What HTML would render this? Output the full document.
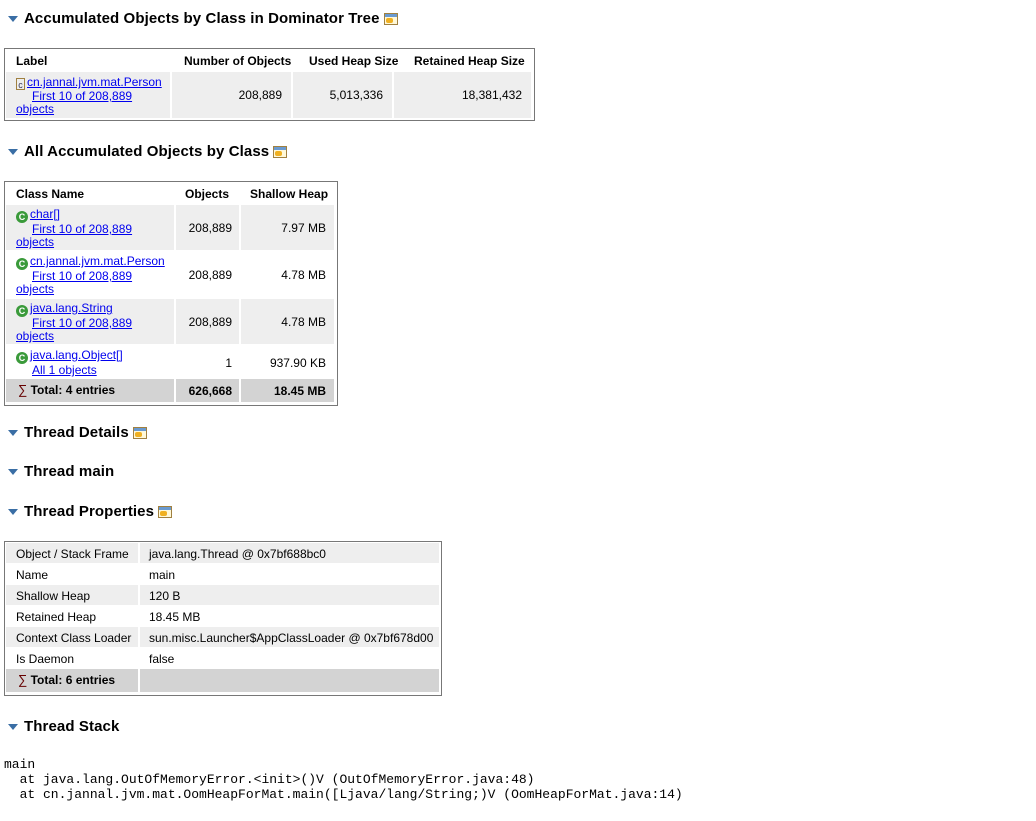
<!DOCTYPE html>
<html><head><meta charset="utf-8"><style>
body{margin:0;background:#fff;width:1036px;height:821px;position:relative;overflow:hidden;font-family:"Liberation Sans",sans-serif;color:#000}
.a{position:absolute;white-space:nowrap}
h2{position:absolute;margin:0;font-size:15px;font-weight:bold;left:24px;line-height:18px;white-space:nowrap;letter-spacing:0.1px}
.tri{position:absolute;left:8px;width:0;height:0;border-left:5px solid transparent;border-right:5px solid transparent;border-top:6px solid #3a6ea5}
.ic{display:inline-block;vertical-align:-2px;margin-left:4px;width:14px;height:12px;border:1px solid #a08040;background:linear-gradient(#6a9ad0 0 3px,#fff8d8 3px);position:relative;box-sizing:border-box}
.ic:after{content:"";position:absolute;left:1px;top:4px;width:7px;height:5px;background:#f0b020;border-radius:2px}
.box{position:absolute;border:1px solid #777;background:#fff;box-sizing:border-box}
.c{position:absolute;font-size:12px;line-height:13px;box-sizing:border-box}
.g{background:#eee}.t{background:#d3d3d3}
.b{font-weight:bold}
a{color:#00e;text-decoration:underline}
.r{text-align:right}
.cc{display:inline-block;width:12px;height:12px;border-radius:50%;background:#3a9a3a;color:#fff;font-size:9px;font-weight:bold;line-height:12px;text-align:center;vertical-align:-2px;margin-right:2px}
pre{position:absolute;margin:0;left:4px;top:757px;font-family:"Liberation Mono",monospace;font-size:13px;line-height:15px}
</style></head><body>

<div class="tri" style="top:16px"></div><h2 style="top:10px">Accumulated Objects by Class in Dominator Tree<span class="ic"></span></h2>

<div class="box" style="left:4px;top:48px;width:531px;height:73px"></div>
<div class="c b" style="left:16px;top:55px">Label</div>
<div class="c b" style="left:184px;top:55px">Number of Objects</div>
<div class="c b" style="left:309px;top:55px">Used Heap Size</div>
<div class="c b" style="left:414px;top:55px">Retained Heap Size</div>
<div class="c g" style="left:6px;top:72px;width:164px;height:46px;padding:4px 0 0 10px"><span style="display:inline-block;width:9px;height:12px;border:1px solid #a08040;font-size:9px;line-height:12px;color:#335;text-align:center;vertical-align:-2px;margin-right:2px;box-sizing:border-box">c</span><a>cn.jannal.jvm.mat.Person</a><br><a style="margin-left:16px">First 10 of 208,889</a><br><a>objects</a></div>
<div class="c g r" style="left:172px;top:72px;width:119px;height:46px;padding:17px 9px 0 0">208,889</div>
<div class="c g r" style="left:293px;top:72px;width:99px;height:46px;padding:17px 9px 0 0">5,013,336</div>
<div class="c g r" style="left:394px;top:72px;width:137px;height:46px;padding:17px 9px 0 0">18,381,432</div>

<div class="tri" style="top:149px"></div><h2 style="top:143px">All Accumulated Objects by Class<span class="ic"></span></h2>

<div class="box" style="left:4px;top:181px;width:334px;height:225px"></div>
<div class="c b" style="left:16px;top:188px">Class Name</div>
<div class="c b" style="left:185px;top:188px">Objects</div>
<div class="c b" style="left:250px;top:188px">Shallow Heap</div>

<div class="c g" style="left:6px;top:205px;width:168px;height:45px;padding:3px 0 0 10px"><span class="cc">C</span><a>char[]</a><br><a style="margin-left:16px">First 10 of 208,889</a><br><a>objects</a></div>
<div class="c g r" style="left:176px;top:205px;width:63px;height:45px;padding:17px 7px 0 0">208,889</div>
<div class="c g r" style="left:241px;top:205px;width:93px;height:45px;padding:17px 8px 0 0">7.97 MB</div>

<div class="c" style="left:6px;top:252px;width:168px;height:45px;padding:3px 0 0 10px"><span class="cc">C</span><a>cn.jannal.jvm.mat.Person</a><br><a style="margin-left:16px">First 10 of 208,889</a><br><a>objects</a></div>
<div class="c r" style="left:176px;top:252px;width:63px;height:45px;padding:17px 7px 0 0">208,889</div>
<div class="c r" style="left:241px;top:252px;width:93px;height:45px;padding:17px 8px 0 0">4.78 MB</div>

<div class="c g" style="left:6px;top:299px;width:168px;height:45px;padding:3px 0 0 10px"><span class="cc">C</span><a>java.lang.String</a><br><a style="margin-left:16px">First 10 of 208,889</a><br><a>objects</a></div>
<div class="c g r" style="left:176px;top:299px;width:63px;height:45px;padding:17px 7px 0 0">208,889</div>
<div class="c g r" style="left:241px;top:299px;width:93px;height:45px;padding:17px 8px 0 0">4.78 MB</div>

<div class="c" style="left:6px;top:346px;width:168px;height:31px;padding:3px 0 0 10px"><span class="cc">C</span><a>java.lang.Object[]</a><br><a style="margin-left:16px">All 1 objects</a></div>
<div class="c r" style="left:176px;top:346px;width:63px;height:31px;padding:11px 7px 0 0">1</div>
<div class="c r" style="left:241px;top:346px;width:93px;height:31px;padding:11px 8px 0 0">937.90 KB</div>

<div class="c t b" style="left:6px;top:379px;width:168px;height:23px;padding:4px 0 0 12px"><span style="font-weight:normal;color:#600;font-size:13px">∑</span> Total: 4 entries</div>
<div class="c t b r" style="left:176px;top:379px;width:63px;height:23px;padding:6px 7px 0 0">626,668</div>
<div class="c t b r" style="left:241px;top:379px;width:93px;height:23px;padding:6px 8px 0 0">18.45 MB</div>

<div class="tri" style="top:430px"></div><h2 style="top:424px">Thread Details<span class="ic"></span></h2>
<div class="tri" style="top:469px"></div><h2 style="top:463px">Thread main</h2>
<div class="tri" style="top:509px"></div><h2 style="top:503px">Thread Properties<span class="ic"></span></h2>

<div class="box" style="left:4px;top:541px;width:438px;height:155px"></div>
<div class="c g" style="left:6px;top:543px;width:132px;height:20px;padding:5px 0 0 10px">Object / Stack Frame</div><div class="c g" style="left:140px;top:543px;width:299px;height:20px;padding:5px 0 0 9px">java.lang.Thread @ 0x7bf688bc0</div>
<div class="c" style="left:6px;top:564px;width:132px;height:20px;padding:5px 0 0 10px">Name</div><div class="c" style="left:140px;top:564px;width:299px;height:20px;padding:5px 0 0 9px">main</div>
<div class="c g" style="left:6px;top:585px;width:132px;height:20px;padding:5px 0 0 10px">Shallow Heap</div><div class="c g" style="left:140px;top:585px;width:299px;height:20px;padding:5px 0 0 9px">120 B</div>
<div class="c" style="left:6px;top:606px;width:132px;height:20px;padding:5px 0 0 10px">Retained Heap</div><div class="c" style="left:140px;top:606px;width:299px;height:20px;padding:5px 0 0 9px">18.45 MB</div>
<div class="c g" style="left:6px;top:627px;width:132px;height:20px;padding:5px 0 0 10px">Context Class Loader</div><div class="c g" style="left:140px;top:627px;width:299px;height:20px;padding:5px 0 0 9px">sun.misc.Launcher$AppClassLoader @ 0x7bf678d00</div>
<div class="c" style="left:6px;top:648px;width:132px;height:20px;padding:5px 0 0 10px">Is Daemon</div><div class="c" style="left:140px;top:648px;width:299px;height:20px;padding:5px 0 0 9px">false</div>
<div class="c t b" style="left:6px;top:669px;width:132px;height:23px;padding:4px 0 0 12px"><span style="font-weight:normal;color:#600;font-size:13px">∑</span> Total: 6 entries</div><div class="c t" style="left:140px;top:669px;width:299px;height:23px"></div>

<div class="tri" style="top:724px"></div><h2 style="top:718px">Thread Stack</h2>

<pre>main
  at java.lang.OutOfMemoryError.&lt;init&gt;()V (OutOfMemoryError.java:48)
  at cn.jannal.jvm.mat.OomHeapForMat.main([Ljava/lang/String;)V (OomHeapForMat.java:14)</pre>
</body></html>
